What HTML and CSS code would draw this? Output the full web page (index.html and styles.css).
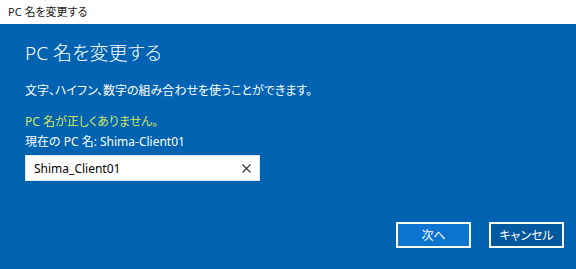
FILE: index.html
```html
<!DOCTYPE html>
<html lang="ja">
<head>
    <meta charset="UTF-8">
    <title>PC 名を変更する</title>
    <link rel="stylesheet" href="styles.css">
</head>
<body>
    <!-- Title bar -->
    <div class="titlebar">PC 名を変更する</div>

    <!-- Dialog body -->
    <div class="dialog">
        <h1 class="dialog-title">PC 名を変更する</h1>
        <p class="hint">文字、ハイフン、数字の組み合わせを使うことができます。</p>

        <p class="error">PC 名が正しくありません。</p>
        <p class="current">現在の PC 名: Shima-Client01</p>

        <div class="name-box">
            <span class="name-value">Shima_Client01</span>
            <svg class="clear" width="9" height="9" viewBox="0 0 9 9">
                <path d="M0.5 0.5 L8.5 8.5 M8.5 0.5 L0.5 8.5" stroke="#333" stroke-width="1.1" fill="none"/>
            </svg>
        </div>

        <div class="actions">
            <button class="btn btn-next">次へ</button>
            <button class="btn btn-cancel">キャンセル</button>
        </div>
    </div>
</body>
</html>
```

FILE: styles.css
```css
* {
    margin: 0;
    padding: 0;
    box-sizing: border-box;
    font-family: "Noto Sans", "Noto Sans CJK JP", sans-serif;
    font-feature-settings: "palt";
}

body {
    width: 576px;
    height: 269px;
    background-color: #0063b1;
    overflow: hidden;
}

/* Title bar */
.titlebar {
    height: 24px;
    background-color: #ffffff;
    color: #1a1a1a;
    font-size: 11px;
    line-height: 24px;
    padding-left: 8px;
}

/* Dialog */
.dialog {
    display: flex;
    flex-direction: column;
    padding: 15px 25px 0;
    color: #ffffff;
    height: 245px;
}

.dialog-title {
    font-size: 19px;
    font-weight: 300;
    line-height: 28px;
}

.hint {
    font-size: 12px;
    line-height: 16px;
    margin-top: 16px;
}

.error {
    font-size: 12px;
    line-height: 16px;
    margin-top: 15px;
    color: #d4e35c;
}

.current {
    font-size: 12px;
    line-height: 16px;
    margin-top: 4px;
}

.name-box {
    display: flex;
    align-items: center;
    justify-content: space-between;
    width: 235px;
    height: 26px;
    margin-top: 5px;
    padding: 0 8px 0 8px;
    background-color: #ffffff;
    border: 1px solid #e6e6e6;
}

.name-value {
    color: #000000;
    font-size: 12px;
}

/* Buttons */
.actions {
    display: flex;
    justify-content: flex-end;
    gap: 18px;
    margin-top: 41px;
    margin-right: -13px;
}

.btn {
    width: 75px;
    height: 26px;
    border: 2px solid #ffffff;
    color: #ffffff;
    font-size: 12px;
}

.btn-next {
    background-color: #0b74d1;
}

.btn-cancel {
    background-color: #00589e;
}
```
